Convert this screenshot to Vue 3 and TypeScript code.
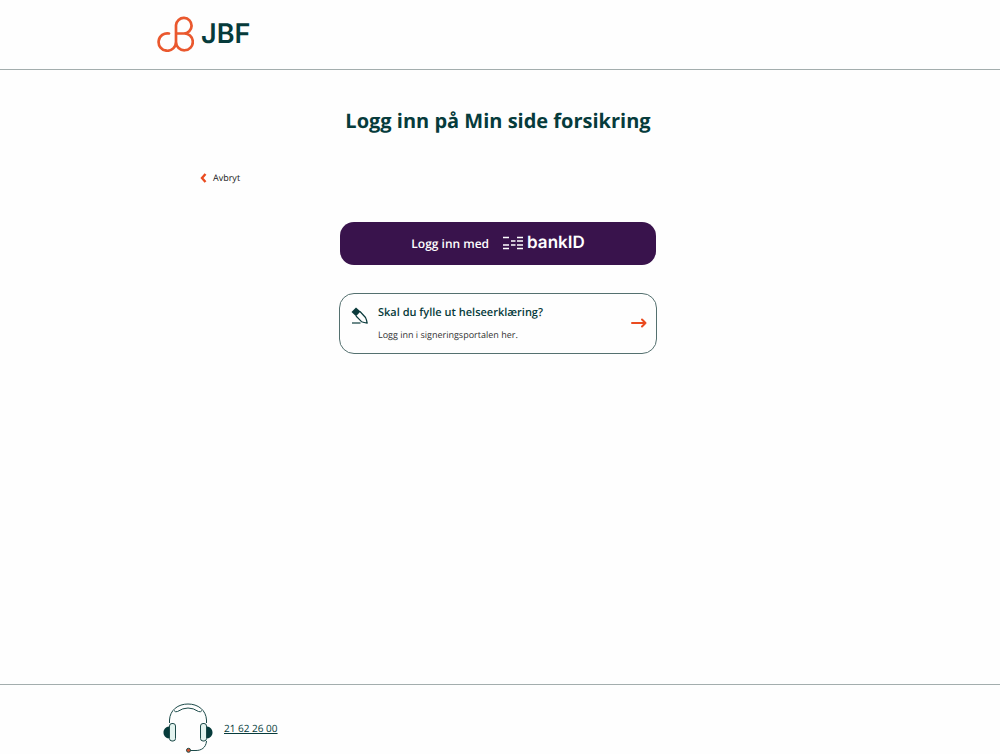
<script setup lang="ts">
interface Portal {
  title: string
  text: string
}

const phone = '21 62 26 00'
const phoneHref = `tel:+47${phone.replace(/\s/g, '')}`
const portal: Portal = {
  title: 'Skal du fylle ut helseerklæring?',
  text: 'Logg inn i signeringsportalen her.',
}
</script>

<template>
  <div class="page">
    <header class="header">
      <div class="wide">
        <a class="logo" href="#" aria-label="JBF">
          <svg class="logo-mark" viewBox="0 0 37 37" fill="none" aria-hidden="true">
            <path
              d="M12 18.500A8.700 8.700 0 1 0 19 27V10.200A7.800 7.800 0 1 1 26.800 18.500H20M26.800 18.500A8.400 8.400 0 1 1 19 27"
              stroke="#ea582e"
              stroke-width="2.700"
              stroke-linecap="round"
            />
          </svg>
          <span class="logo-text">JBF</span>
        </a>
      </div>
    </header>

    <main class="main">
      <h1 class="title">Logg inn på Min side forsikring</h1>
      <div class="content">
        <a class="cancel" href="#">
          <svg class="chevron" viewBox="0 0 7 10" fill="none" aria-hidden="true">
            <path d="M5.500 1 2 5 5.500 9" stroke="#ea4b20" stroke-width="2.400" />
          </svg>
          Avbryt
        </a>
        <div class="choices">
          <button class="bankid" type="button">
            <span>Logg inn med</span>
            <span class="bankid-brand">
              <svg class="bankid-mark" viewBox="0 0 20 14" aria-hidden="true">
                <path
                  d="M0 1.500H6M0 12.500H6M0 9H6M8 5H12.500M8 9H12.500M14 1.500H20M14 5H20M14 9H20M14 12.500H20"
                  stroke="#fff"
                  stroke-width="1.400"
                />
              </svg>
              <span class="bankid-name">bankID</span>
            </span>
          </button>
          <a class="portal" href="#">
            <svg class="pen" viewBox="0 0 18 18" fill="none" aria-hidden="true">
              <path
                d="M5 9 10.500 14.700Q13 15.500 16.200 16.200Q15.700 13 14.500 10.500L9 4.500"
                stroke="#0b3b3c"
                stroke-width="1.200"
                stroke-linejoin="round"
              />
              <path d="M5 .500 9.500 4.500 5 9.300 .500 5Z" fill="#0b3b3c" />
              <path d="M1 16H9.500" stroke="#0b3b3c" stroke-width="1.200" />
            </svg>
            <span class="portal-body">
              <strong class="portal-title">{{ portal.title }}</strong>
              <span class="portal-text">{{ portal.text }}</span>
            </span>
            <svg class="arrow" viewBox="0 0 16 10" fill="none" aria-hidden="true">
              <path d="M1 5H14.500M11 1.500 14.500 5 11 8.500" stroke="#ea4b20" stroke-width="2" stroke-linecap="round" stroke-linejoin="round" />
            </svg>
          </a>
        </div>
      </div>
    </main>

    <footer class="footer">
      <div class="wide contact">
        <svg class="headset" viewBox="0 0 50 50" fill="none" stroke="#1c4a49" aria-hidden="true">
          <path d="M6.500 20V17C7 7 15 1 25 1S43 7 43.500 17V20" />
          <path d="M11 7.500Q12.500 9.500 14.500 8.500Q25 1.500 35.500 8.500Q37.500 9.500 39 7.500" />
          <path d="M43.500 38C43 45 38 47.500 33 47.500H27" />
          <path d="M6 23.500C2 24 .5 27 .5 29.500S2 35 6 35.500ZM44 23.500C48 24 49.500 27 49.500 29.500S48 35 44 35.500Z" fill="#063b3b" stroke="none" />
          <rect x="6.500" y="20.500" width="6" height="17.500" rx="2.500" fill="#e3f3ef" />
          <rect x="37.500" y="20.500" width="6" height="17.500" rx="2.500" fill="#e3f3ef" />
          <circle cx="25.500" cy="47.300" r="2" fill="#d9532f" />
        </svg>
        <a class="phone" :href="phoneHref">{{ phone }}</a>
      </div>
    </footer>
  </div>
</template>

<style>
body {
  margin: 0;
  background: #fefefe;
}
</style>

<style scoped>
.page {
  display: flex;
  flex-direction: column;
  min-height: 100vh;
  color: #063b3b;
  font-family: "Open Sans", "Noto Sans", sans-serif;
  text-rendering: geometricPrecision;
}

.page * {
  box-sizing: border-box;
}

a {
  color: inherit;
  text-decoration: none;
}

svg {
  display: block;
  flex: none;
}

.header,
.main,
.footer {
  padding-right: 4px;
}

.header {
  border-bottom: 1px solid #a3adad;
}

.wide {
  max-width: 682px;
  margin: 0 auto;
}

.header .wide {
  padding: 15px 0 17px;
}

.logo {
  display: inline-flex;
  gap: 7px;
  vertical-align: top;
}

.logo-mark {
  width: 37px;
  height: 37px;
}

.logo-text {
  font-family: Inter, sans-serif;
  font-size: 27px;
  font-weight: 600;
  line-height: 37px;
}

.main {
  flex: 1;
}

.title {
  margin: 37px 0 0;
  font-size: 20px;
  font-weight: 700;
  line-height: 28px;
  text-align: center;
}

.content {
  max-width: 596px;
  margin: 34px auto 0;
}

.cancel {
  display: flex;
  align-items: center;
  gap: 6px;
  width: fit-content;
  color: #222;
  font-size: 9px;
  line-height: 17px;
}

.chevron {
  width: 7px;
  height: 10px;
}

.choices {
  display: flex;
  flex-direction: column;
  gap: 28px;
  max-width: 318px;
  margin: 36px auto 0;
}

.bankid {
  display: flex;
  align-items: center;
  justify-content: center;
  gap: 14px;
  height: 43px;
  margin: 0 1px;
  padding: 0;
  border: 0;
  border-radius: 14px;
  background: #39134c;
  color: #fff;
  font: 600 12px/20px "Open Sans", "Noto Sans", sans-serif;
  text-rendering: inherit;
  cursor: pointer;
}

.bankid-brand {
  display: flex;
  align-items: center;
  gap: 4px;
  padding-bottom: 2px;
}

.bankid-mark {
  width: 20px;
  height: 14px;
}

.bankid-name {
  font-family: Inter, sans-serif;
  font-size: 17px;
  font-weight: 600;
}

.portal {
  display: flex;
  align-items: center;
  padding: 9px 9px 11px 11px;
  border: 1px solid #54706f;
  border-radius: 15px;
}

.pen {
  align-self: flex-start;
  width: 18px;
  height: 18px;
  margin-top: 4px;
}

.portal-body {
  display: flex;
  flex: 1;
  flex-direction: column;
  gap: 4px;
  margin-left: 9px;
}

.portal-title {
  font-size: 11px;
  font-weight: 600;
  line-height: 20px;
}

.portal-text {
  color: #333;
  font-size: 9px;
  line-height: 15px;
}

.arrow {
  width: 16px;
  height: 10px;
}

.footer {
  border-top: 1px solid #a3adad;
}

.contact {
  display: flex;
  align-items: center;
  gap: 11px;
  padding: 18px 6px 1px;
}

.headset {
  width: 50px;
  height: 50px;
}

.phone {
  font-size: 10px;
  line-height: 16px;
  text-decoration: underline;
}
</style>
